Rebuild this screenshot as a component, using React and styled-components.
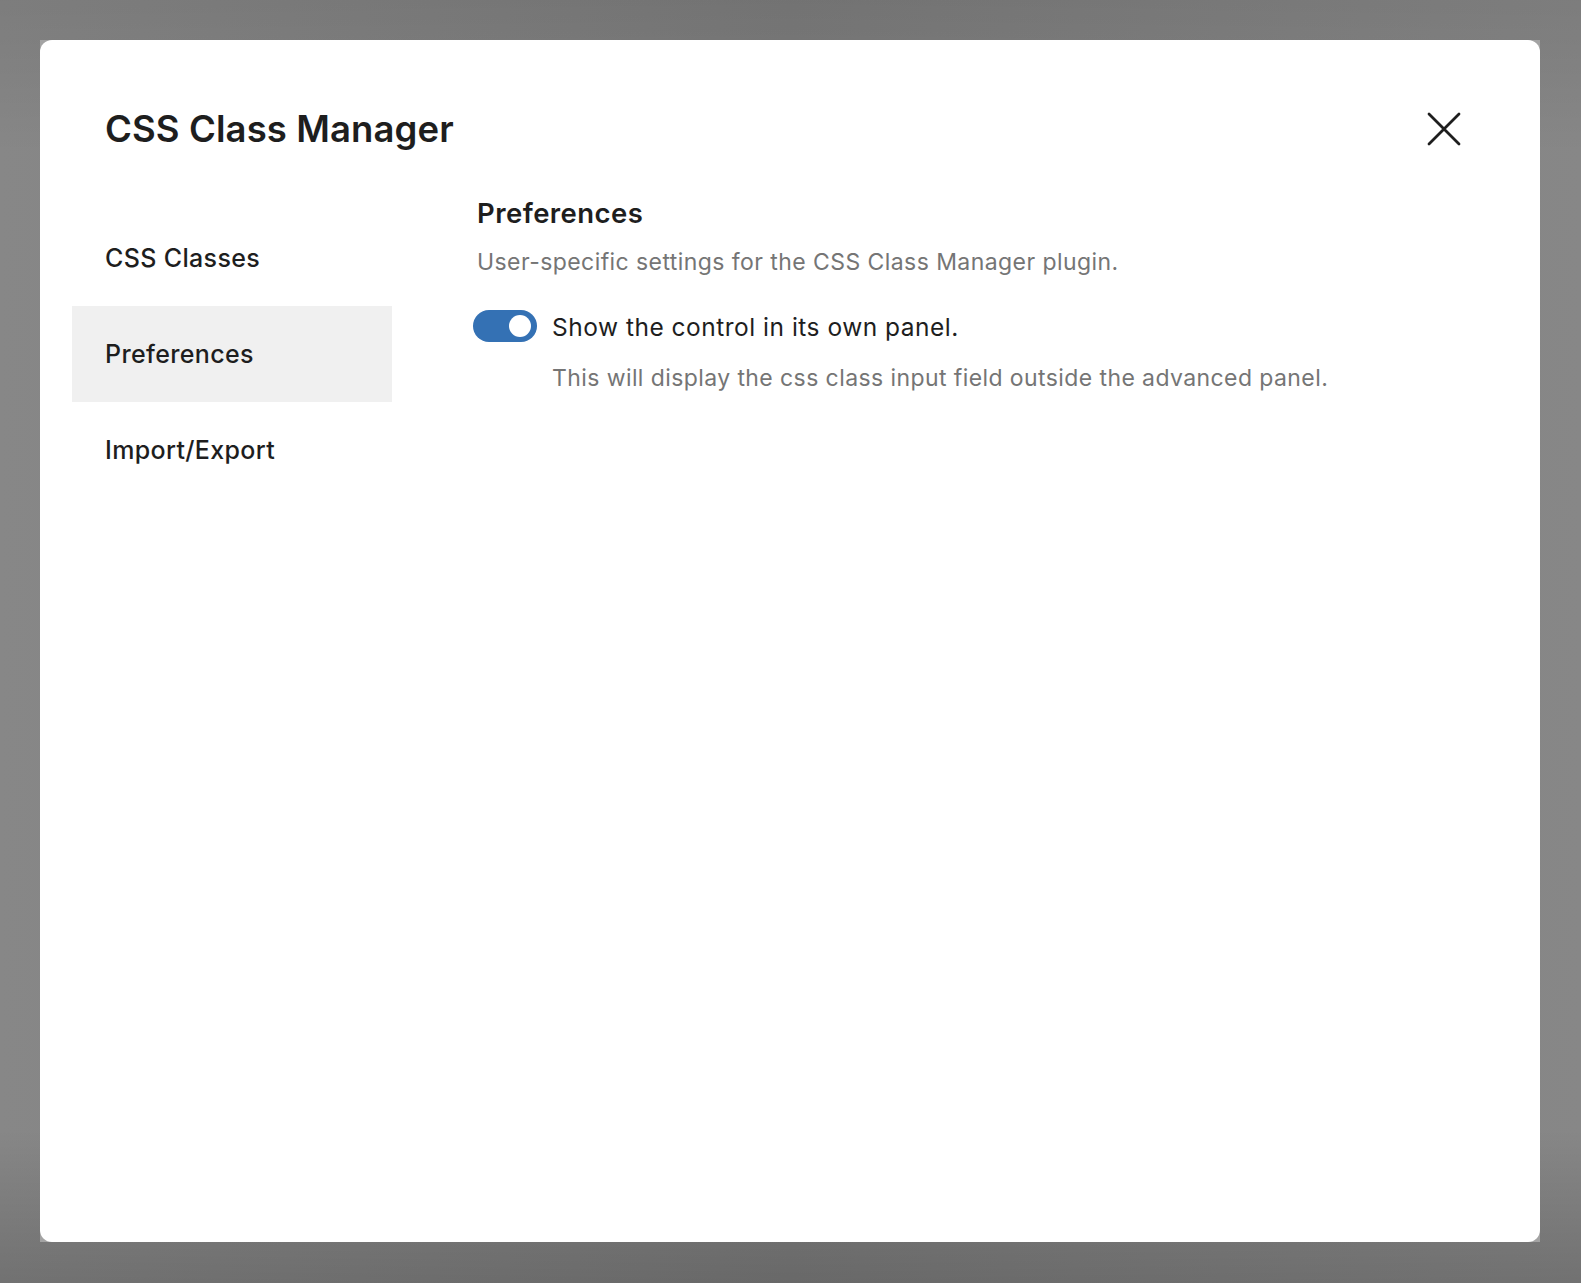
import React, { useState } from 'react'
import styled, { createGlobalStyle } from 'styled-components'

const GlobalStyle = createGlobalStyle`
html, body {
    margin:0;
    padding:0;
}
body {
    font-family:Inter, "Noto Sans", "Liberation Sans", sans-serif;
    color:#1e1e1e;
    -webkit-font-smoothing:antialiased;
}
`

const Overlay = styled.div`
width:1581px;
height:1283px;
box-sizing:border-box;
padding:40px 41px 41px 40px;
background:
    linear-gradient(to bottom, rgba(0,0,0,.08) 0%, rgba(0,0,0,0) 12%, rgba(0,0,0,0) 88%, rgba(0,0,0,.16) 100%),
    linear-gradient(to right, #878787 0%, #7c7c7c 50%, #878787 100%);
`
const Frame = styled.div`
height:100%;
background:#a3a3a3;
`
const Modal = styled.div`
height:100%;
background:#fff;
border-radius:12px;
display:flex;
flex-direction:column;
box-sizing:border-box;
padding:0 0 0 32px;
`
const Header = styled.div`
display:flex;
align-items:center;
justify-content:space-between;
padding:65px 72px 0 33px;
`
const Title = styled.h1`
margin:0;
font-size:36.5px;
line-height:48px;
font-weight:600;
letter-spacing:0.1px;
color:#1e1e1e;
`
const CloseButton = styled.button`
width:48px;
height:48px;
border:0;
padding:0;
background:transparent;
display:flex;
align-items:center;
justify-content:center;
cursor:pointer;
color:#1e1e1e;
`
const Body = styled.div`
display:flex;
align-items:flex-start;
margin-top:44px;
`
const Sidebar = styled.nav`
width:320px;
display:flex;
flex-direction:column;
padding-top:13px;
`
const NavItem = styled.div`
height:96px;
display:flex;
align-items:center;
padding-left:33px;
font-size:25px;
font-weight:500;
letter-spacing:0.35px;
color:#1e1e1e;
background:${props => props.active ? '#f0f0f0' : 'transparent'};
cursor:pointer;
`
const Content = styled.section`
flex:1;
padding-left:85px;
`
const Heading = styled.h2`
margin:0;
font-size:27.5px;
line-height:32px;
font-weight:600;
letter-spacing:0.45px;
color:#1e1e1e;
`
const Description = styled.p`
margin:17px 0 0;
font-size:23px;
line-height:32px;
letter-spacing:0.43px;
color:#757575;
`
const ToggleRow = styled.label`
display:flex;
align-items:center;
gap:15px;
margin:31px 0 0 -4px;
cursor:pointer;
`
const Track = styled.span`
position:relative;
width:64px;
height:32px;
border-radius:16px;
box-sizing:border-box;
background:${props => props.on ? '#3471b4' : '#fff'};
border:${props => props.on ? 'none' : '3px solid #1e1e1e'};
flex-shrink:0;
`
const Thumb = styled.span`
position:absolute;
top:5px;
left:${props => props.on ? '36px' : '5px'};
width:22px;
height:22px;
border-radius:50%;
background:${props => props.on ? '#fff' : '#1e1e1e'};
transition:left .1s;
`
const Label = styled.span`
font-size:24.5px;
line-height:32px;
letter-spacing:0.5px;
color:#1e1e1e;
padding-top:2px;
`
const Help = styled.p`
margin:19px 0 0 75px;
font-size:23px;
line-height:32px;
letter-spacing:0.41px;
color:#757575;
`

const CloseIcon = () => (
    <svg width="34" height="34" viewBox="0 0 34 34" fill="none">
        <path d="M2 2L32 32M32 2L2 32" stroke="currentColor" strokeWidth="2.8" strokeLinecap="round" />
    </svg>
)

const tabs = ['CSS Classes', 'Preferences', 'Import/Export']

const App = () => {
    const [active, setActive] = useState('Preferences')
    const [on, setOn] = useState(true)
    return (
        <>
            <GlobalStyle />
            <Overlay>
                <Frame>
                    <Modal>
                        <Header>
                            <Title>CSS Class Manager</Title>
                            <CloseButton aria-label="Close"><CloseIcon /></CloseButton>
                        </Header>
                        <Body>
                            <Sidebar>
                                {tabs.map(t => (
                                    <NavItem key={t} active={t === active} onClick={() => setActive(t)}>{t}</NavItem>
                                ))}
                            </Sidebar>
                            <Content>
                                <Heading>Preferences</Heading>
                                <Description>User-specific settings for the CSS Class Manager plugin.</Description>
                                <ToggleRow onClick={() => setOn(!on)}>
                                    <Track on={on}><Thumb on={on} /></Track>
                                    <Label>Show the control in its own panel.</Label>
                                </ToggleRow>
                                <Help>This will display the css class input field outside the advanced panel.</Help>
                            </Content>
                        </Body>
                    </Modal>
                </Frame>
            </Overlay>
        </>
    )
}
export default App
